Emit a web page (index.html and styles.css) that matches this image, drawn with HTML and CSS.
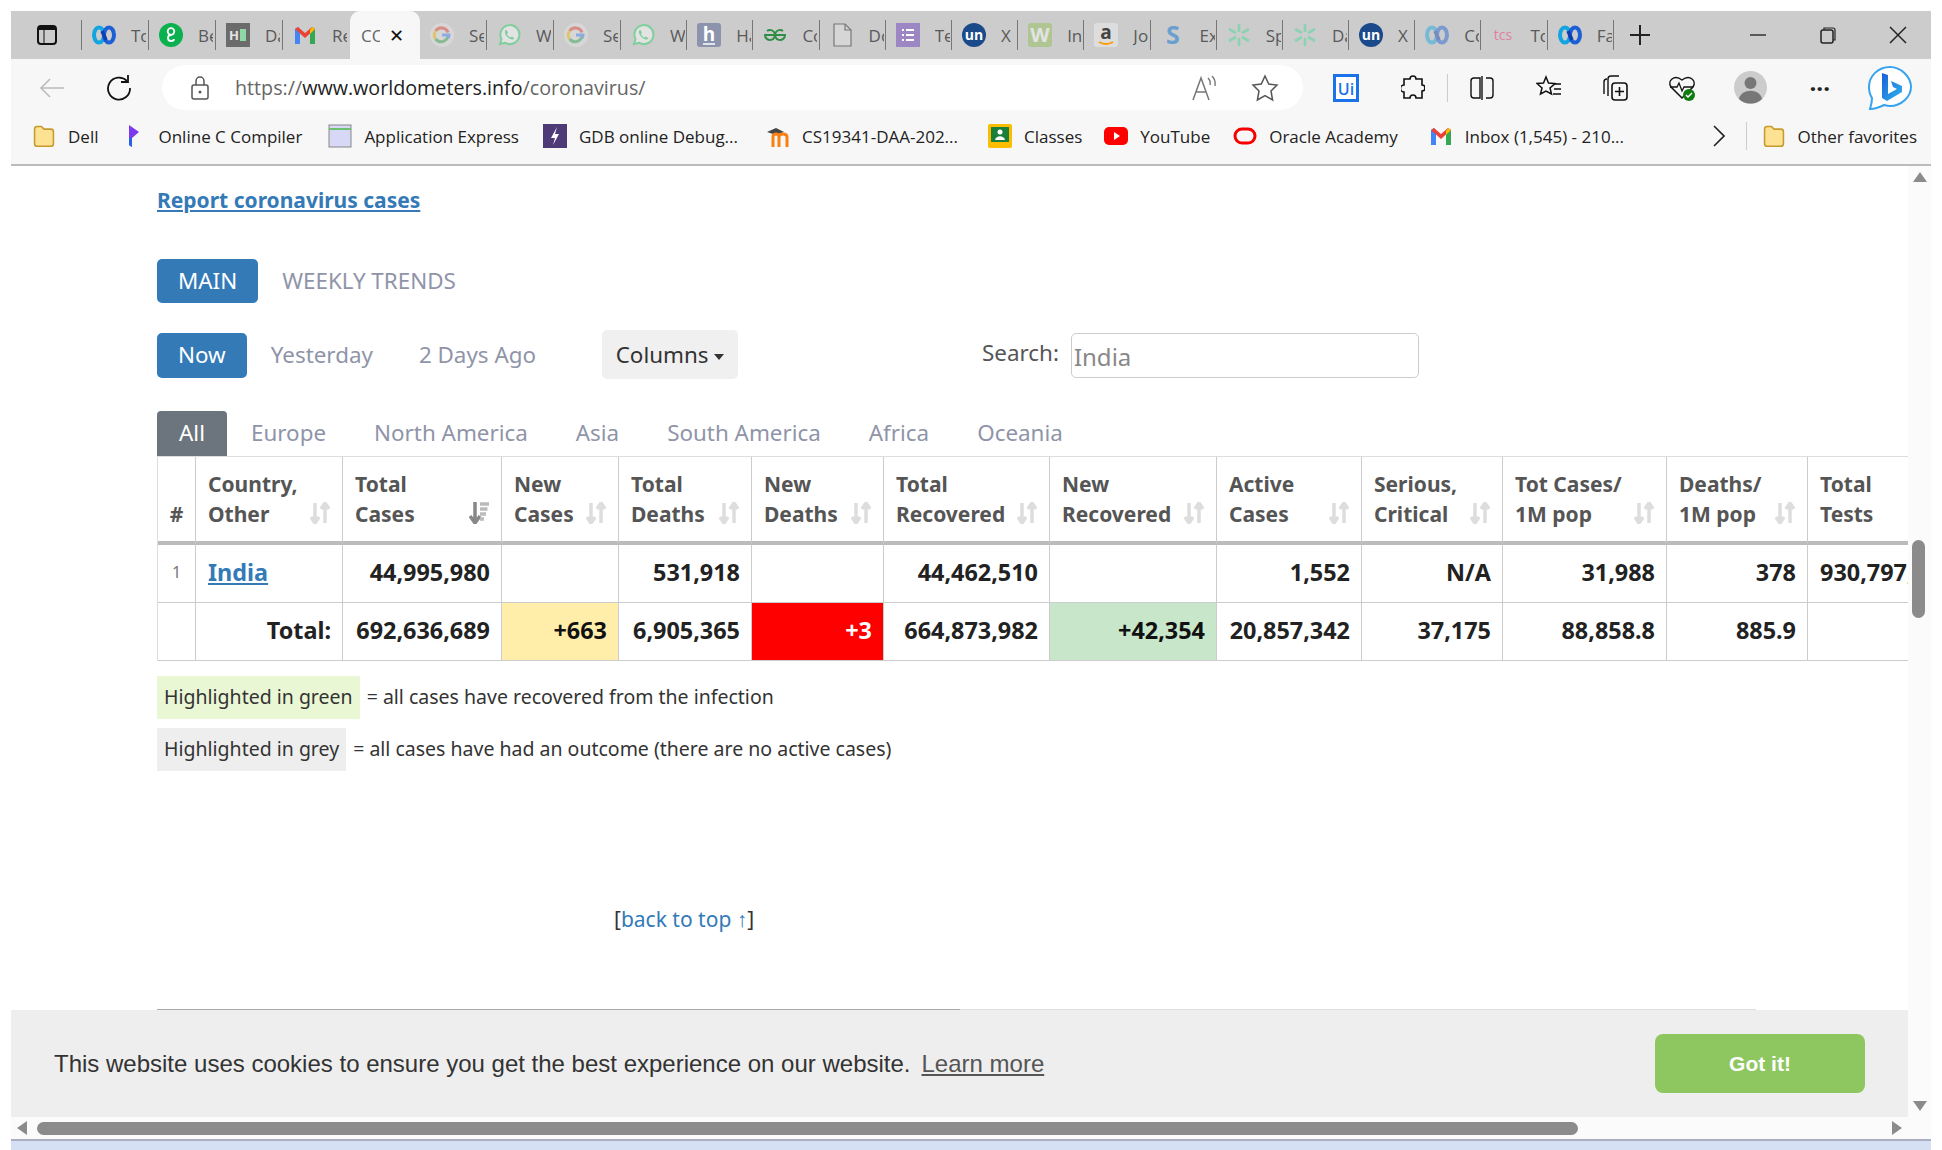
FILE: index.html
```html
<!DOCTYPE html>
<html lang="en">
<head>
    <meta charset="UTF-8">
    <title>Coronavirus Update</title>
    <link rel="stylesheet" href="styles.css">
</head>
<body>
    <svg class="defs" width="0" height="0">
        <symbol id="webex" viewBox="0 0 24 24">
            <ellipse cx="7" cy="12" rx="5" ry="7.500" fill="none" stroke="#14a5e0" stroke-width="4"/>
            <ellipse cx="17" cy="12" rx="5" ry="7.500" fill="none" stroke="#1d5fd6" stroke-width="4"/>
            <path d="M10 8l4 9" stroke="#0d3fb0" stroke-width="3.500"/>
        </symbol>
        <symbol id="google" viewBox="0 0 24 24">
            <circle cx="12" cy="12" r="12" fill="#e6e6e6"/>
            <path d="M18 9.500a7 7 0 0 0-12.400-1.500" fill="none" stroke="#ea4335" stroke-width="3"/>
            <path d="M5.600 8a7 7 0 0 0 0 8" fill="none" stroke="#fbbc05" stroke-width="3"/>
            <path d="M5.600 16a7 7 0 0 0 12.400-3" fill="none" stroke="#34a853" stroke-width="3"/>
            <path d="M12 12h7c0 1-.2 2-1 3" fill="none" stroke="#4285f4" stroke-width="3"/>
        </symbol>
        <symbol id="whatsapp" viewBox="0 0 24 24">
            <path d="M3 21l1.500-5A9.500 9.500 0 1 1 8 19.700z" fill="#fff" stroke="#25d366" stroke-width="2"/>
            <path d="M8.500 7c-1.500 2 0 5 2 7s5 3.500 7 1.500l-2.500-2-1.500 1c-1.500-.5-3-2-3.500-3.500l1-1.500-1.500-2.500z" fill="#25d366"/>
        </symbol>
        <symbol id="snow" viewBox="0 0 24 24">
            <path d="M12 1v8M12 15v8M2 6l7 4M15 14l7 4M2 18l7-4M15 10l7-4" stroke="#3ddc97" stroke-width="2.600" fill="none"/>
        </symbol>
        <symbol id="un" viewBox="0 0 24 24">
            <circle cx="12" cy="12" r="12" fill="#1a4a8a"/>
            <text x="12" y="17" text-anchor="middle" font-family="Open Sans" font-weight="700" font-size="14" fill="#fff">un</text>
        </symbol>
        <symbol id="gmail" viewBox="0 0 24 24">
            <path d="M2 21V6l3-2 2 3v14z" fill="#4285f4"/>
            <path d="M17 21V7l2-3 3 2v15z" fill="#34a853"/>
            <path d="M2 6l3-2 7 6 7-6 3 2-10 9z" fill="#ea4335"/>
            <path d="M19 4l3 2-5 5V7z" fill="#fbbc05"/>
        </symbol>
        <symbol id="folder" viewBox="0 0 24 28">
            <path d="M1 6q0-3 3-3h5l3 3h8q3 0 3 3v14q0 3-3 3H4q-3 0-3-3z" fill="#fde293" stroke="#c79a2e" stroke-width="1.800"/>
        </symbol>
        <symbol id="sort" viewBox="0 0 20 22">
            <path d="M5 1v18M1 15l4 6 4-6" fill="none" stroke="#ddd" stroke-width="3.500"/>
            <path d="M15 21V3M11 7l4-6 4 6" fill="none" stroke="#ddd" stroke-width="3.500"/>
        </symbol>
        <symbol id="sorted" viewBox="0 0 20 22">
            <path d="M6 0v19M1 14l5 7 5-7" fill="none" stroke="#888" stroke-width="3.500"/>
            <path d="M11 2h9M11 7h7.500M11 12h6M11 17h4" stroke="#bbb" stroke-width="3.500"/>
        </symbol>
    </svg>

    <div class="window">
        <div class="tabstrip">
            <div class="side-btn">
                <svg width="22" height="22" viewBox="0 0 22 22"><rect x="2" y="2" width="18" height="18" rx="3" fill="none" stroke="#111" stroke-width="2"/><path d="M2 6h18V4l-2-2H4L2 4z" fill="#111"/><path d="M8 6v14" stroke="#111" stroke-width="1"/></svg>
            </div>
            <div class="tab"><svg class="ico"><use href="#webex"/></svg><span class="tab-name">To</span></div>
            <div class="tab"><svg class="ico" viewBox="0 0 24 24"><circle cx="12" cy="12" r="12" fill="#0bb04f"/><circle cx="12" cy="8.500" r="3.300" fill="none" stroke="#fff" stroke-width="1.800"/><path d="M12 12c-4 0-4 6 0 6 2 0 3-1 3-2" fill="none" stroke="#fff" stroke-width="1.800"/></svg><span class="tab-name">Be</span></div>
            <div class="tab"><svg class="ico" viewBox="0 0 24 24"><rect width="24" height="24" fill="#6b6b6b"/><text x="8" y="17" text-anchor="middle" font-family="Open Sans" font-weight="700" font-size="13" fill="#e5e5e5">H</text><rect x="14" y="6" width="6" height="12" fill="#8fd6a8"/></svg><span class="tab-name">Da</span></div>
            <div class="tab"><svg class="ico"><use href="#gmail"/></svg><span class="tab-name">Re</span></div>
            <div class="tab tab-active"><span class="tab-name">CO</span><span class="tab-close">&#10005;</span></div>
            <div class="tab tab-faded"><svg class="ico"><use href="#google"/></svg><span class="tab-name">Se</span></div>
            <div class="tab tab-faded"><svg class="ico"><use href="#whatsapp"/></svg><span class="tab-name">Wh</span></div>
            <div class="tab tab-faded"><svg class="ico"><use href="#google"/></svg><span class="tab-name">Se</span></div>
            <div class="tab tab-faded"><svg class="ico"><use href="#whatsapp"/></svg><span class="tab-name">Wh</span></div>
            <div class="tab"><svg class="ico" viewBox="0 0 24 24"><rect width="24" height="24" rx="3" fill="#8b93ad"/><text x="12" y="18" text-anchor="middle" font-family="Open Sans" font-weight="700" font-size="19" fill="#fff">h</text><path d="M6 21h12" stroke="#fff" stroke-width="1.500"/></svg><span class="tab-name">Ha</span></div>
            <div class="tab"><svg class="ico" viewBox="0 0 24 24"><path d="M12 12h10a5 5 0 1 1-2-4M12 12H2a5 5 0 1 0 2-4" fill="none" stroke="#2f8d46" stroke-width="2"/></svg><span class="tab-name">Co</span></div>
            <div class="tab"><svg class="ico" viewBox="0 0 24 24"><path d="M4 1h11l6 6v16H4z" fill="#d6d6d6" stroke="#777" stroke-width="1.200"/><path d="M15 1v6h6" fill="none" stroke="#777" stroke-width="1.200"/></svg><span class="tab-name">Do</span></div>
            <div class="tab"><svg class="ico" viewBox="0 0 24 24"><rect width="24" height="24" fill="#9c86c4"/><path d="M6 7h2M10 7h8M6 12h2M10 12h8M6 17h2M10 17h8" stroke="#fff" stroke-width="2.200"/></svg><span class="tab-name">Te</span></div>
            <div class="tab"><svg class="ico"><use href="#un"/></svg><span class="tab-name">X</span></div>
            <div class="tab tab-faded"><svg class="ico" viewBox="0 0 24 24"><rect width="24" height="24" rx="3" fill="#8cc04f"/><text x="12" y="19" text-anchor="middle" font-family="Open Sans" font-weight="700" font-size="20" fill="#fff">W</text></svg><span class="tab-name">In</span></div>
            <div class="tab"><svg class="ico" viewBox="0 0 24 24"><rect width="24" height="24" rx="3" fill="#ddd"/><text x="12" y="16" text-anchor="middle" font-family="Open Sans" font-weight="700" font-size="19" fill="#444">a</text><path d="M5 19q7 4 14 0" fill="none" stroke="#f90" stroke-width="2"/></svg><span class="tab-name">Jo</span></div>
            <div class="tab"><svg class="ico" viewBox="0 0 24 24"><text x="12" y="21" text-anchor="middle" font-family="Open Sans" font-weight="700" font-size="25" fill="#6a9fd0">S</text></svg><span class="tab-name">Ex</span></div>
            <div class="tab tab-faded"><svg class="ico"><use href="#snow"/></svg><span class="tab-name">Sp</span></div>
            <div class="tab tab-faded"><svg class="ico"><use href="#snow"/></svg><span class="tab-name">Da</span></div>
            <div class="tab"><svg class="ico"><use href="#un"/></svg><span class="tab-name">X</span></div>
            <div class="tab tab-faded"><svg class="ico"><use href="#webex"/></svg><span class="tab-name">Co</span></div>
            <div class="tab"><svg class="ico" viewBox="0 0 24 24"><text x="12" y="17" text-anchor="middle" font-family="Open Sans" font-size="14" fill="#e0809f">tcs</text></svg><span class="tab-name">To</span></div>
            <div class="tab"><svg class="ico"><use href="#webex"/></svg><span class="tab-name">Fa</span></div>
            <div class="new-tab">
                <svg width="22" height="22" viewBox="0 0 22 22"><path d="M11 1v20M1 11h20" stroke="#222" stroke-width="2"/></svg>
            </div>
            <div class="win-btns">
                <svg width="18" height="18" viewBox="0 0 18 18"><path d="M1 9h16" stroke="#333" stroke-width="1.500"/></svg>
                <svg width="18" height="18" viewBox="0 0 18 18"><rect x="2" y="4" width="12" height="13" rx="2" fill="none" stroke="#222" stroke-width="1.500"/><path d="M5 4V2h9q2 0 2 2v10h-2" fill="none" stroke="#222" stroke-width="1.200"/></svg>
                <svg width="18" height="18" viewBox="0 0 18 18"><path d="M1 1l16 16M17 1L1 17" stroke="#222" stroke-width="1.500"/></svg>
            </div>
        </div>

        <div class="toolbar">
            <div class="tbtn tbtn-first"><svg width="26" height="20" viewBox="0 0 26 20"><path d="M25 10H2M11 1l-9 9 9 9" fill="none" stroke="#bbb" stroke-width="1.600"/></svg></div>
            <div class="tbtn"><svg width="26" height="26" viewBox="0 0 26 26"><path d="M21 6a11 11 0 1 0 3 7" fill="none" stroke="#111" stroke-width="1.800"/><path d="M15 7h7V0" fill="none" stroke="#111" stroke-width="1.800"/></svg></div>
            <div class="address">
                <svg width="18" height="24" viewBox="0 0 18 24"><rect x="1" y="9" width="16" height="14" rx="2" fill="none" stroke="#555" stroke-width="1.500"/><path d="M5 9V5a4 4 0 0 1 8 0v4" fill="none" stroke="#555" stroke-width="1.500"/><circle cx="9" cy="16" r="1.500" fill="#555"/></svg>
                <span class="url"><span class="url-dim">https://</span>www.worldometers.info<span class="url-dim">/coronavirus/</span></span>
                <svg class="read-aloud" width="26" height="26" viewBox="0 0 26 26"><path d="M1 25L9 3l8 22M4 17h10" fill="none" stroke="#777" stroke-width="1.500"/><path d="M16 3q3 3 2 7M20 1q4 4 3 10" fill="none" stroke="#777" stroke-width="1.400"/></svg>
                <svg width="28" height="28" viewBox="0 0 28 28"><path d="M14 2l3.700 8 8.300 1-6 6 1.600 9L14 21.500 6.400 26 8 17l-6-6 8.300-1z" fill="none" stroke="#555" stroke-width="1.500"/></svg>
            </div>
            <div class="tools">
                <div class="tbtn"><svg width="26" height="28" viewBox="0 0 26 28"><rect width="26" height="28" fill="#1a73e8"/><rect x="3" y="3" width="20" height="22" fill="#fff"/><text x="13" y="21" text-anchor="middle" font-family="Open Sans" font-weight="600" font-size="16" fill="#1a73e8">Ui</text></svg></div>
                <div class="tbtn"><svg width="24" height="26" viewBox="0 0 24 26"><path d="M9 4a3 3 0 0 1 6 0h6v6a3 3 0 0 1 0 6v7h-6a3 3 0 0 0-6 0H3v-6a3 3 0 0 1 0-7V4z" fill="none" stroke="#111" stroke-width="1.600"/></svg></div>
                <div class="tool-sep"></div>
                <div class="tbtn"><svg width="24" height="24" viewBox="0 0 24 24"><path d="M10 2H4Q1 2 1 5v14q0 3 3 3h6zM12 0v24M16 2h4q3 0 3 3v14q0 3-3 3h-4" fill="none" stroke="#111" stroke-width="1.400"/></svg></div>
                <div class="tbtn"><svg width="26" height="26" viewBox="0 0 26 26"><path d="M10 2l2.500 6 6.500.500-5 4.500 1.500 6L10 16l-5.500 3L6 13 1 8.500 7.500 8z" fill="none" stroke="#111" stroke-width="1.500"/><path d="M18 9h7M18 14h7M17 19h8" stroke="#111" stroke-width="1.500"/></svg></div>
                <div class="tbtn"><svg width="26" height="28" viewBox="0 0 26 28"><path d="M6 22V5q0-3 3-3h8" fill="none" stroke="#111" stroke-width="1.400"/><path d="M2 20V8q0-3 3-3" fill="none" stroke="#111" stroke-width="1.400"/><rect x="10" y="9" width="15" height="17" rx="3" fill="#f7f7f7" stroke="#111" stroke-width="1.600"/><path d="M17.500 13v9M13 17.500h9" stroke="#111" stroke-width="1.600"/></svg></div>
                <div class="tbtn"><svg width="28" height="28" viewBox="0 0 28 28"><path d="M14 24L3 13C-1 7 6 0 14 6c8-6 15 1 11 7z" fill="none" stroke="#111" stroke-width="1.500"/><path d="M2 13h7l2-4 3 8 2-4h9" fill="none" stroke="#111" stroke-width="1.300"/><circle cx="21" cy="21" r="6" fill="#107c10"/><path d="M18 21l2 2 4-4" fill="none" stroke="#fff" stroke-width="1.500"/></svg></div>
                <div class="tbtn avatar"><svg width="33" height="33" viewBox="0 0 33 33"><circle cx="16.500" cy="16.500" r="16.500" fill="#ccc"/><circle cx="16.500" cy="12" r="6" fill="#777"/><path d="M5 28c2-11 21-11 23 0-6 6-17 6-23 0z" fill="#777"/></svg></div>
                <div class="tbtn more">&middot;&middot;&middot;</div>
                <div class="tbtn bing">
                    <svg width="46" height="46" viewBox="0 0 46 46">
                        <defs>
                            <linearGradient id="bingfill" x1="0" y1="0" x2="1" y2="1"><stop offset="0" stop-color="#1b5fd8"/><stop offset="1" stop-color="#2fb4ec"/></linearGradient>
                        </defs>
                        <path d="M23 2C11 2 2 11 2 22c0 5 1 8 3 11 0 4-1 8-2 11 5 0 10-2 14-4 2 .5 4 1 6 1 11 0 21-9 21-19S34 2 23 2z" fill="#fff" stroke="#36a3ee" stroke-width="2"/>
                        <path d="M15 8l6 2v19l9-5-4-2-2-6 11 5v6l-15 9-5-3z" fill="url(#bingfill)"/>
                    </svg>
                </div>
            </div>
        </div>

        <div class="bookmarks">
            <a class="bm bm-dell"><svg class="ico"><use href="#folder"/></svg>Dell</a>
            <a class="bm bm-compiler"><svg class="ico" viewBox="0 0 24 24"><path d="M7 1l10 7-7 6v9l-3-2z" fill="#7c3aed"/><path d="M7 14l3 0v9l-3-2z" fill="#2563eb"/></svg>Online C Compiler</a>
            <a class="bm bm-apex"><svg class="ico" viewBox="0 0 24 24"><rect x="1" y="1" width="22" height="22" fill="#d6d8f5" stroke="#888"/><path d="M1 5h22" stroke="#6cc070" stroke-width="2"/></svg>Application Express</a>
            <a class="bm bm-gdb"><svg class="ico" viewBox="0 0 24 24"><rect width="24" height="24" fill="#4f3a78"/><path d="M14 3l-6 11h4l-2 7 6-11h-4z" fill="#fff"/></svg>GDB online Debug...</a>
            <a class="bm bm-daa"><svg class="ico" viewBox="0 0 24 24"><path d="M1 8l9-4 8 4-8 3z" fill="#444"/><path d="M7 23V13q0-3 3-3 3 0 3 3v10M13 13q0-3 4-3t4 3v10" fill="none" stroke="#f98012" stroke-width="3"/></svg>CS19341-DAA-202...</a>
            <a class="bm bm-classes"><svg class="ico" viewBox="0 0 24 24"><rect width="24" height="24" rx="2" fill="#fbbc04"/><rect x="3" y="3" width="18" height="15" fill="#188038"/><circle cx="12" cy="8" r="2.500" fill="#fff"/><path d="M7 16c1-5 9-5 10 0z" fill="#fff"/></svg>Classes</a>
            <a class="bm bm-yt"><svg class="ico" viewBox="0 0 24 24"><rect y="3" width="24" height="18" rx="5" fill="#f00"/><path d="M10 8l6 4-6 4z" fill="#fff"/></svg>YouTube</a>
            <a class="bm bm-oracle"><svg class="ico" viewBox="0 0 24 24"><rect x="2" y="5" width="20" height="14" rx="7" fill="none" stroke="#f80000" stroke-width="3"/></svg>Oracle Academy</a>
            <a class="bm bm-inbox"><svg class="ico"><use href="#gmail"/></svg>Inbox (1,545) - 210...</a>
            <svg class="bm-more" width="12" height="22" viewBox="0 0 12 22"><path d="M1 1l10 10L1 21" fill="none" stroke="#222" stroke-width="1.600"/></svg>
            <div class="bm-sep"></div>
            <a class="bm"><svg class="ico"><use href="#folder"/></svg>Other favorites</a>
        </div>

        <div class="viewport">
            <div class="page">
                <a class="report-link" href="#">Report coronavirus cases</a>

                <div class="pills pills-main">
                    <a class="pill pill-on">MAIN</a>
                    <a class="pill">WEEKLY TRENDS</a>
                </div>

                <div class="pills pills-day">
                    <a class="pill pill-on">Now</a>
                    <a class="pill">Yesterday</a>
                    <a class="pill">2 Days Ago</a>
                    <button class="columns-btn">Columns <span class="caret"></span></button>
                    <label class="search-label">Search:</label>
                    <input class="search-input" type="text" value="India">
                </div>

                <div class="regions">
                    <a class="region region-on">All</a>
                    <a class="region">Europe</a>
                    <a class="region">North America</a>
                    <a class="region">Asia</a>
                    <a class="region">South America</a>
                    <a class="region">Africa</a>
                    <a class="region">Oceania</a>
                </div>

                <table class="cases">
                    <colgroup>
                        <col class="c-num"><col class="c-country"><col class="c-total"><col class="c-new"><col class="c-deaths"><col class="c-newd"><col class="c-rec"><col class="c-newr"><col class="c-active"><col class="c-serious"><col class="c-tot1m"><col class="c-d1m"><col class="c-tests">
                    </colgroup>
                    <thead>
                        <tr>
                            <th class="th-num">#</th>
                            <th><div class="th-in"><span>Country,<br>Other</span><svg class="sort"><use href="#sort"/></svg></div></th>
                            <th><div class="th-in"><span>Total<br>Cases</span><svg class="sort"><use href="#sorted"/></svg></div></th>
                            <th><div class="th-in"><span>New<br>Cases</span><svg class="sort"><use href="#sort"/></svg></div></th>
                            <th><div class="th-in"><span>Total<br>Deaths</span><svg class="sort"><use href="#sort"/></svg></div></th>
                            <th><div class="th-in"><span>New<br>Deaths</span><svg class="sort"><use href="#sort"/></svg></div></th>
                            <th><div class="th-in"><span>Total<br>Recovered</span><svg class="sort"><use href="#sort"/></svg></div></th>
                            <th><div class="th-in"><span>New<br>Recovered</span><svg class="sort"><use href="#sort"/></svg></div></th>
                            <th><div class="th-in"><span>Active<br>Cases</span><svg class="sort"><use href="#sort"/></svg></div></th>
                            <th><div class="th-in"><span>Serious,<br>Critical</span><svg class="sort"><use href="#sort"/></svg></div></th>
                            <th><div class="th-in"><span>Tot&nbsp;Cases/<br>1M pop</span><svg class="sort"><use href="#sort"/></svg></div></th>
                            <th><div class="th-in"><span>Deaths/<br>1M pop</span><svg class="sort"><use href="#sort"/></svg></div></th>
                            <th><div class="th-in"><span>Total<br>Tests</span></div></th>
                        </tr>
                    </thead>
                    <tbody>
                        <tr>
                            <td class="rank">1</td>
                            <td class="left"><a class="country" href="#">India</a></td>
                            <td>44,995,980</td>
                            <td></td>
                            <td>531,918</td>
                            <td></td>
                            <td>44,462,510</td>
                            <td></td>
                            <td>1,552</td>
                            <td>N/A</td>
                            <td>31,988</td>
                            <td>378</td>
                            <td class="left">930,797,</td>
                        </tr>
                        <tr>
                            <td></td>
                            <td>Total:</td>
                            <td>692,636,689</td>
                            <td class="hl-yellow">+663</td>
                            <td>6,905,365</td>
                            <td class="hl-red">+3</td>
                            <td>664,873,982</td>
                            <td class="hl-green">+42,354</td>
                            <td>20,857,342</td>
                            <td>37,175</td>
                            <td>88,858.8</td>
                            <td>885.9</td>
                            <td></td>
                        </tr>
                    </tbody>
                </table>

                <div class="legend"><span class="legend-box box-green">Highlighted in green</span> = all cases have recovered from the infection</div>
                <div class="legend legend-2"><span class="legend-box box-grey">Highlighted in grey</span> = all cases have had an outcome (there are no active cases)</div>

                <div class="back-top">[<a href="#">back to top &uarr;</a>]</div>
                <div class="rule"></div>

                <div class="cookie">
                    <span class="cookie-msg">This website uses cookies to ensure you get the best experience on our website.</span>
                    <a class="cookie-more" href="#">Learn more</a>
                    <a class="cookie-btn">Got it!</a>
                </div>
            </div>

            <div class="vbar">
                <span class="arr arr-up"></span>
                <div class="vthumb"></div>
                <span class="arr arr-down"></span>
            </div>
            <div class="hbar">
                <span class="arr arr-left"></span>
                <div class="hthumb"></div>
                <span class="arr arr-right"></span>
            </div>
            <div class="corner"></div>
        </div>
    </div>
    <div class="desktop"></div>
</body>
</html>
```

FILE: styles.css
```css
* {
    box-sizing: border-box;
}
html, body {
    margin: 0;
    height: 100%;
}
body {
    background-color: white;
    width: 1942px;
    height: 1150px;
    overflow: hidden;
    font-family: "Open Sans", sans-serif;
}
.defs {
    display: none;
}
.window {
    margin: 11px 11px 0 11px;
    height: 1128px;
    display: flex;
    flex-direction: column;
}
.desktop {
    height: 11px;
    margin: 0 11px;
    background-color: #d6e0f5;
    border-top: 2px solid #aab0c4;
}
.ico {
    width: 24px;
    height: 24px;
    flex: none;
}

/* tab strip */
.tabstrip {
    height: 48px;
    background-color: #cccccc;
    display: flex;
    align-items: center;
    flex: none;
}
.side-btn {
    width: 71px;
    padding-left: 25px;
    height: 30px;
    display: flex;
    align-items: center;
    border-right: 1px solid #777;
}
.tab {
    width: 67px;
    height: 30px;
    flex: none;
    display: flex;
    align-items: center;
    gap: 15px;
    padding-left: 10px;
    border-right: 1px solid #777;
    color: #333;
    font-size: 17px;
}
.tab:nth-child(n+10) {
    width: 66.2px;
}
.tab-name {
    width: 15px;
    overflow: hidden;
    white-space: nowrap;
    opacity: .75;
}
.tab-active {
    width: 70px;
    height: 48px;
    background-color: #f7f7f7;
    border-right: none;
    border-radius: 10px 10px 0 0;
    gap: 9px;
    padding-left: 11px;
}
.tab:has(+ .tab-active) {
    border-right: none;
}
.tab-active .tab-name {
    width: 19px;
}
.tab-close {
    font-size: 18px;
    color: #111;
    opacity: 1;
}
.tab-faded .ico {
    opacity: .45;
}
.new-tab {
    margin-left: 15px;
    display: flex;
}
.win-btns {
    margin-left: auto;
    width: 182px;
    padding-right: 24px;
    display: flex;
    justify-content: space-between;
}

/* address bar */
.toolbar {
    height: 57px;
    background-color: #f7f7f7;
    display: flex;
    align-items: center;
    flex: none;
}
.tbtn {
    width: 66.500px;
    height: 46px;
    flex: none;
    display: flex;
    align-items: center;
    justify-content: center;
}
.tbtn-first {
    margin-left: 8px;
}
.address {
    margin-left: 10px;
    width: 1141px;
    height: 45px;
    flex: none;
    background-color: white;
    border-radius: 23px;
    display: flex;
    align-items: center;
    padding: 0 24px 0 29px;
}
.url {
    margin-left: 26px;
    font-size: 19.700px;
    color: #222;
    flex: 1;
}
.url-dim {
    color: #666;
}
.read-aloud {
    margin-right: 33px;
}
.tools {
    margin-left: 10px;
    display: flex;
    align-items: center;
}
.tool-sep {
    width: 1px;
    height: 28px;
    background-color: #ccc;
    margin: 0 1px;
}
.avatar {
    margin-left: 2px;
}
.more {
    margin-left: 3px;
    font-size: 24px;
    font-weight: 700;
    color: #222;
}
.bing {
    margin-left: 12px;
    width: 50px;
}

/* favorites bar */
.bookmarks {
    height: 40px;
    padding: 0 0 8px 21px;
    background-color: #f7f7f7;
    border-bottom: 2px solid #bbbbbb;
    box-sizing: content-box;
    display: flex;
    align-items: center;
    flex: none;
    font-size: 17px;
    color: #222;
    white-space: nowrap;
}
.bm {
    display: flex;
    align-items: center;
    gap: 12px;
    margin-right: 30px;
}
.bm-dell { margin-right: 24px; }
.bm-compiler { margin-right: 26px; }
.bm-apex { margin-right: 24px; }
.bm-gdb { margin-right: 28px; }
.bm-classes { margin-right: 22px; }
.bm-yt { margin-right: 23px; }
.bm-oracle { margin-right: 31px; }
.bm-more {
    margin-left: auto;
    margin-right: 21px;
}
.bm-sep {
    width: 1px;
    height: 28px;
    background-color: #ccc;
    margin-right: 15px;
}
.bookmarks .bm:last-child {
    margin-right: 14px;
}

/* page */
.viewport {
    flex: 1;
    min-height: 0;
    display: grid;
    grid-template-columns: 1fr 23px;
    grid-template-rows: 1fr 22px;
}
.page {
    position: relative;
    overflow: hidden;
    padding: 19px 0 0 146px;
    color: #444;
    font-family: "Noto Sans", sans-serif;
}
.report-link {
    display: block;
    line-height: 30px;
    font-size: 21px;
    font-weight: 700;
    color: #337ab7;
    text-decoration: underline;
}
.pills {
    display: flex;
    align-items: flex-start;
    font-size: 22.400px;
}
.pills-main {
    margin-top: 44px;
}
.pills-day {
    margin-top: 27px;
}
.pill {
    height: 44px;
    line-height: 44px;
    padding: 0 22px;
    margin-right: 2px;
    color: #8f94a8;
    white-space: nowrap;
}
.pill-on {
    background-color: #337ab7;
    color: white;
    border-radius: 5px;
    padding: 0 21px;
}
.pills-day .pill {
    margin-top: 3px;
    height: 45px;
}
.columns-btn {
    height: 49px;
    width: 136px;
    margin-left: 42px;
    padding: 0;
    border: none;
    border-radius: 5px;
    background-color: #f0f0f0;
    color: #333;
    font: inherit;
}
.caret {
    display: inline-block;
    width: 0;
    height: 0;
    margin-bottom: 3px;
    border-top: 6px solid #333;
    border-left: 5px solid transparent;
    border-right: 5px solid transparent;
}
.search-label {
    margin-left: 244px;
    line-height: 46px;
    font-size: 22.400px;
    color: #555;
    white-space: nowrap;
}
.search-input {
    margin-left: 12px;
    margin-top: 3px;
    width: 348px;
    height: 45px;
    padding: 2px 2px 0;
    border: 1px solid #ccc;
    border-radius: 5px;
    font: inherit;
    font-size: 24px;
    color: #888;
}
.regions {
    margin-top: 32px;
    display: flex;
    font-size: 22.400px;
}
.region {
    height: 45px;
    line-height: 44px;
    padding: 0 24px;
    color: #8f94a8;
}
.region-on {
    width: 70px;
    padding: 0;
    text-align: center;
    background-color: #6c757d;
    color: white;
    border-radius: 4px 4px 0 0;
}
.cases {
    table-layout: fixed;
    width: 1769px;
    border-collapse: separate;
    border-spacing: 0;
    border-left: 1px solid #ddd;
    border-top: 1px solid #ddd;
}
.c-num { width: 38px; }
.c-country { width: 147px; }
.c-total { width: 159px; }
.c-new { width: 117px; }
.c-deaths { width: 133px; }
.c-newd { width: 132px; }
.c-rec { width: 166px; }
.c-newr { width: 167px; }
.c-active { width: 145px; }
.c-serious { width: 141px; }
.c-tot1m { width: 164px; }
.c-d1m { width: 141px; }
.c-tests { width: 119px; }
.cases th {
    height: 88px;
    padding: 8px 12px 12px 12px;
    border-right: 1px solid #ccc;
    border-bottom: 4px solid #bbb;
    font-size: 21px;
    line-height: 30px;
    font-weight: 700;
    color: #555;
    text-align: left;
    vertical-align: bottom;
    white-space: nowrap;
}
.cases .th-num {
    padding: 0 0 12px;
    text-align: center;
}
.th-in {
    display: flex;
    justify-content: space-between;
    align-items: flex-end;
}
.sort {
    width: 20px;
    height: 22px;
    margin-bottom: 5px;
    flex: none;
}
.cases td {
    height: 58px;
    padding: 0 11px 3px 10px;
    border-right: 1px solid #ccc;
    border-bottom: 1px solid #ccc;
    text-align: right;
    font-size: 23.400px;
    font-weight: 700;
    color: #222;
    white-space: nowrap;
    overflow: hidden;
}
.cases td.left {
    text-align: left;
    padding-left: 12px;
}
.cases td.rank {
    text-align: center;
    padding: 0 0 3px;
    font-size: 16px;
    font-weight: 400;
    color: #777;
}
.country {
    color: #337ab7;
    text-decoration: underline;
}
.cases td.hl-yellow {
    background-color: #ffeeaa;
    color: #111;
}
.cases td.hl-red {
    background-color: #ff0000;
    color: white;
}
.cases td.hl-green {
    background-color: #c8e6c9;
    color: #111;
}
.legend {
    margin-top: 15px;
    font-size: 19.500px;
    line-height: 41px;
    color: #333;
}
.legend-2 {
    margin-top: 9px;
}
.legend-box {
    display: inline-block;
    padding: 0 7px 2px;
    margin-right: 2px;
}
.box-green {
    background-color: #eaf7d5;
}
.box-grey {
    background-color: #eeeeee;
}
.back-top {
    margin-top: 133px;
    padding-left: 457px;
    line-height: 30px;
    font-size: 21px;
    color: #333;
}
.back-top a {
    color: #337ab7;
    text-decoration: none;
}
.rule {
    margin-top: 75px;
    width: 1599px;
    height: 2px;
    background: linear-gradient(to right, #aaa 803px, #ddd 803px);
}
.cookie {
    position: absolute;
    left: 0;
    right: 0;
    bottom: 0;
    height: 107px;
    background-color: #eeeeee;
    padding: 0 43px 0 43px;
    display: flex;
    align-items: center;
    font-family: "Liberation Sans", Arial, sans-serif;
    font-size: 24px;
    color: #333;
}
.cookie-more {
    margin-left: 11px;
    color: #555;
    text-decoration: underline;
}
.cookie-btn {
    margin-left: auto;
    width: 210px;
    height: 59px;
    line-height: 59px;
    text-align: center;
    border-radius: 8px;
    background-color: #8ec760;
    color: white;
    font-size: 21px;
    font-weight: 700;
}

/* scrollbars */
.vbar {
    background-color: #fbfbfb;
    display: flex;
    flex-direction: column;
    align-items: center;
    position: relative;
}
.vthumb {
    position: absolute;
    left: 4px;
    top: 374px;
    width: 13px;
    height: 78px;
    border-radius: 7px;
    background-color: #8b8b8b;
}
.hbar {
    background-color: #fbfbfb;
    display: flex;
    align-items: center;
    padding: 0 6px;
}
.hthumb {
    margin-left: 10px;
    width: 1541px;
    height: 13px;
    border-radius: 7px;
    background-color: #8b8b8b;
}
.corner {
    background-color: #fbfbfb;
}
.arr {
    display: block;
    width: 0;
    height: 0;
}
.arr-up {
    margin-top: 6px;
    border-bottom: 10px solid #8b8b8b;
    border-left: 7px solid transparent;
    border-right: 7px solid transparent;
}
.arr-down {
    margin-top: auto;
    margin-bottom: 6px;
    border-top: 10px solid #8b8b8b;
    border-left: 7px solid transparent;
    border-right: 7px solid transparent;
}
.arr-left {
    border-right: 10px solid #8b8b8b;
    border-top: 7px solid transparent;
    border-bottom: 7px solid transparent;
}
.arr-right {
    margin-left: auto;
    border-left: 10px solid #8b8b8b;
    border-top: 7px solid transparent;
    border-bottom: 7px solid transparent;
}
```
